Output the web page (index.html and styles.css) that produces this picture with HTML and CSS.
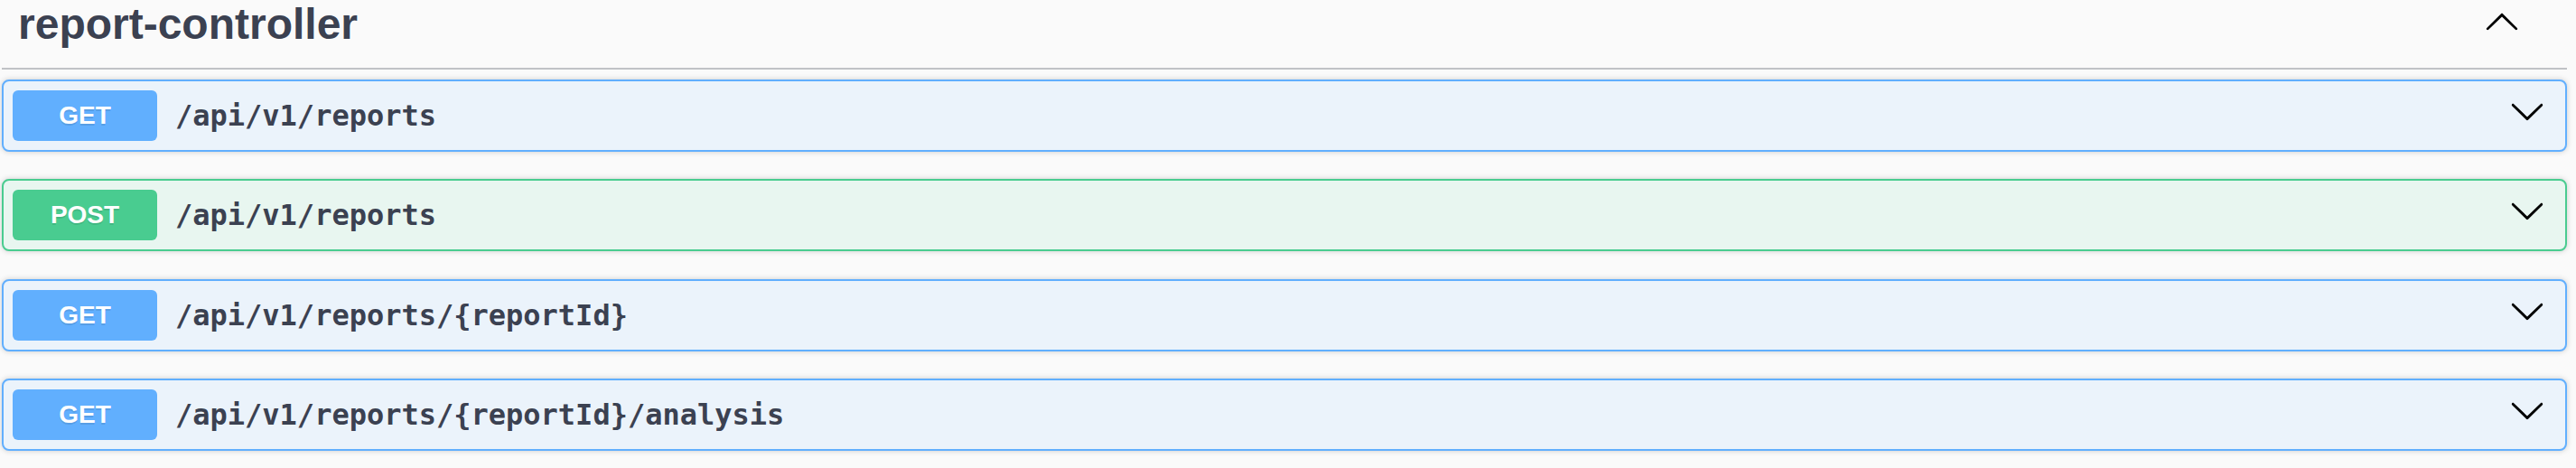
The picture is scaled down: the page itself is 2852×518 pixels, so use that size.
FILE: index.html
```html
<!DOCTYPE html>
<html lang="en">
<head>
<meta charset="utf-8">
<title>report-controller</title>
<link rel="stylesheet" href="styles.css">
</head>
<body>
<section class="tag-section">
  <div class="tag-header">
    <h3 class="tag-title">report-controller</h3>
    <svg class="tag-arrow" viewBox="0 0 20 20" width="40" height="40" aria-hidden="true"><path d="M17.418 14.908c.272.268.709.268.979 0s.271-.701 0-.969l-7.908-7.83c-.27-.268-.707-.268-.979 0l-7.908 7.83c-.27.268-.27.701 0 .969.271.268.709.268.979 0L10 7.767l7.418 7.141z"/></svg>
  </div>

  <div class="opblock get">
    <div class="summary">
      <span class="method">GET</span>
      <span class="path">/api/v1/reports</span>
      <svg class="arrow" viewBox="0 0 20 20" width="40" height="40" aria-hidden="true"><path d="M17.418 6.109c.272-.268.709-.268.979 0s.271.701 0 .969l-7.908 7.83c-.27.268-.707.268-.979 0l-7.908-7.83c-.27-.268-.27-.701 0-.969.271-.268.709-.268.979 0L10 13.25l7.418-7.141z"/></svg>
    </div>
  </div>

  <div class="opblock post">
    <div class="summary">
      <span class="method">POST</span>
      <span class="path">/api/v1/reports</span>
      <svg class="arrow" viewBox="0 0 20 20" width="40" height="40" aria-hidden="true"><path d="M17.418 6.109c.272-.268.709-.268.979 0s.271.701 0 .969l-7.908 7.83c-.27.268-.707.268-.979 0l-7.908-7.83c-.27-.268-.27-.701 0-.969.271-.268.709-.268.979 0L10 13.25l7.418-7.141z"/></svg>
    </div>
  </div>

  <div class="opblock get">
    <div class="summary">
      <span class="method">GET</span>
      <span class="path">/api/v1/reports/{reportId}</span>
      <svg class="arrow" viewBox="0 0 20 20" width="40" height="40" aria-hidden="true"><path d="M17.418 6.109c.272-.268.709-.268.979 0s.271.701 0 .969l-7.908 7.83c-.27.268-.707.268-.979 0l-7.908-7.83c-.27-.268-.27-.701 0-.969.271-.268.709-.268.979 0L10 13.25l7.418-7.141z"/></svg>
    </div>
  </div>

  <div class="opblock get">
    <div class="summary">
      <span class="method">GET</span>
      <span class="path">/api/v1/reports/{reportId}/analysis</span>
      <svg class="arrow" viewBox="0 0 20 20" width="40" height="40" aria-hidden="true"><path d="M17.418 6.109c.272-.268.709-.268.979 0s.271.701 0 .969l-7.908 7.83c-.27.268-.707.268-.979 0l-7.908-7.83c-.27-.268-.27-.701 0-.969.271-.268.709-.268.979 0L10 13.25l7.418-7.141z"/></svg>
    </div>
  </div>
</section>
</body>
</html>
```

FILE: styles.css
```css
html, body {
  margin: 0;
  padding: 0;
  background: #fafafa;
}

body {
  font-family: "Liberation Sans", Arial, sans-serif;
  color: #3b4151;
}

.tag-section {
  padding: 0 10px 0 2px;
}

.tag-header {
  display: flex;
  align-items: center;
  border-bottom: 2px solid rgba(59, 65, 81, 0.3);
  padding: 0 0 21px 18px;
  margin-bottom: 11px;
}

.tag-title {
  margin: 0;
  font-size: 48px;
  line-height: 54px;
  font-weight: 700;
  color: #3b4151;
  flex: 1;
}

.tag-arrow {
  flex: none;
  margin: 0 52px 8px 0;
  fill: #000;
}

.opblock {
  border: 2px solid #61affe;
  border-radius: 8px;
  box-shadow: 0 0 6px rgba(0, 0, 0, 0.19);
  margin-bottom: 30.33px;
  background: #ebf3fb;
}

.opblock.post {
  border-color: #49cc90;
  background: #e8f6f0;
}

.summary {
  display: flex;
  align-items: center;
  padding: 10px;
}

.method {
  flex: none;
  width: 160px;
  height: 56px;
  display: flex;
  align-items: center;
  justify-content: center;
  border-radius: 6px;
  background: #61affe;
  color: #fff;
  font-family: "Liberation Sans", Arial, sans-serif;
  font-size: 28px;
  font-weight: 700;
  text-shadow: 0 2px 0 rgba(0, 0, 0, 0.1);
}

.post .method {
  background: #49cc90;
}

.path {
  flex: 1;
  padding: 0 20px;
  font-family: "DejaVu Sans Mono", monospace;
  font-size: 32px;
  font-weight: 700;
  color: #3b4151;
}

.arrow {
  flex: none;
  margin: 0 12px 10px 0;
  fill: #000;
}
```
